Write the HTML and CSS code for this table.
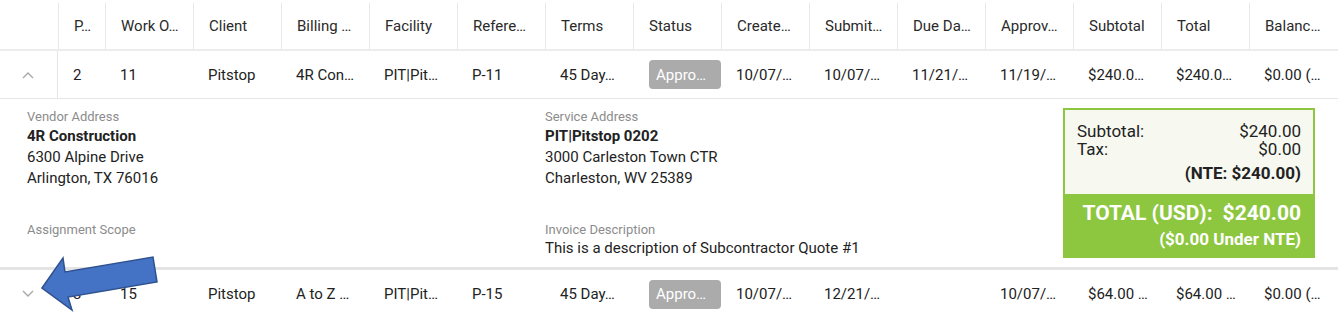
FILE: index.html
```html
<!DOCTYPE html>
<html>
<head>
<meta charset="utf-8">
<link rel="stylesheet" href="styles.css">
</head>
<body>
<div class="table">
  <div class="row head">
    <div class="cell first"></div>
    <div class="cell">P…</div>
    <div class="cell">Work O…</div>
    <div class="cell">Client</div>
    <div class="cell">Billing …</div>
    <div class="cell">Facility</div>
    <div class="cell">Refere…</div>
    <div class="cell">Terms</div>
    <div class="cell">Status</div>
    <div class="cell">Create…</div>
    <div class="cell">Submit…</div>
    <div class="cell">Due Da…</div>
    <div class="cell">Approv…</div>
    <div class="cell">Subtotal</div>
    <div class="cell">Total</div>
    <div class="cell">Balanc…</div>
  </div>

  <div class="row data open">
    <div class="cell first"><svg class="chev" width="12" height="8" viewBox="0 0 12 8"><path d="M1 7 L6 2 L11 7" fill="none" stroke="#a8a8a8" stroke-width="1.4"/></svg></div>
    <div class="cell">2</div>
    <div class="cell">11</div>
    <div class="cell">Pitstop</div>
    <div class="cell">4R Con…</div>
    <div class="cell">PIT|Pit…</div>
    <div class="cell">P-11</div>
    <div class="cell">45 Day…</div>
    <div class="cell"><span class="badge">Appro…</span></div>
    <div class="cell">10/07/…</div>
    <div class="cell">10/07/…</div>
    <div class="cell">11/21/…</div>
    <div class="cell">11/19/…</div>
    <div class="cell">$240.0…</div>
    <div class="cell">$240.0…</div>
    <div class="cell">$0.00 (…</div>
  </div>

  <div class="detail">
    <div class="col">
      <div class="label">Vendor Address</div>
      <div class="line strong">4R Construction</div>
      <div class="line">6300 Alpine Drive</div>
      <div class="line">Arlington, TX 76016</div>
      <div class="label gap">Assignment Scope</div>
    </div>
    <div class="col">
      <div class="label">Service Address</div>
      <div class="line strong">PIT|Pitstop 0202</div>
      <div class="line">3000 Carleston Town CTR</div>
      <div class="line">Charleston, WV 25389</div>
      <div class="label gap">Invoice Description</div>
      <div class="line desc">This is a description of Subcontractor Quote #1</div>
    </div>
    <div class="summary">
      <div class="sum-top">
        <div class="sum-row"><span>Subtotal:</span><span>$240.00</span></div>
        <div class="sum-row"><span>Tax:</span><span>$0.00</span></div>
        <div class="sum-nte">(NTE: $240.00)</div>
      </div>
      <div class="sum-total">
        <div class="total-line"><span>TOTAL (USD):</span><span>$240.00</span></div>
        <div class="under">($0.00 Under NTE)</div>
      </div>
    </div>
  </div>

  <div class="row data">
    <div class="cell first"><svg class="chev" width="12" height="8" viewBox="0 0 12 8"><path d="M1 1 L6 6 L11 1" fill="none" stroke="#a8a8a8" stroke-width="1.4"/></svg></div>
    <div class="cell">3</div>
    <div class="cell">15</div>
    <div class="cell">Pitstop</div>
    <div class="cell">A to Z …</div>
    <div class="cell">PIT|Pit…</div>
    <div class="cell">P-15</div>
    <div class="cell">45 Day…</div>
    <div class="cell"><span class="badge">Appro…</span></div>
    <div class="cell">10/07/…</div>
    <div class="cell">12/21/…</div>
    <div class="cell"></div>
    <div class="cell">10/07/…</div>
    <div class="cell">$64.00 …</div>
    <div class="cell">$64.00 …</div>
    <div class="cell">$0.00 (…</div>
  </div>
</div>

<svg class="arrow" width="170" height="70" viewBox="0 0 170 70">
  <polygon points="42,33 63,3 65,17 153,2 157,27 68,42 72,55" fill="#4472c4" stroke="#2f528f" stroke-width="1.5" stroke-linejoin="miter"/>
</svg>
</body>
</html>
```

FILE: styles.css
```css
* { box-sizing: border-box; }
html, body { margin: 0; padding: 0; background: #fff; }
body {
  width: 1338px;
  height: 322px;
  overflow: hidden;
  position: relative;
  font-family: Roboto, "Noto Sans", "Liberation Sans", sans-serif;
  color: #222;
  font-size: 15px;
}
.table { width: 1338px; }
.row {
  display: grid;
  grid-template-columns: 58px 47px repeat(14, 88px);
}
.cell {
  display: flex;
  align-items: center;
  padding-left: 15px;
  white-space: nowrap;
  overflow: hidden;
}
.cell.first { padding-left: 0; justify-content: center; padding-right: 2px; }
.head {
  height: 51px;
  padding-top: 3px;
  border-bottom: 2px solid #ececec;
  color: #2a2a2a;
}
.head .cell { border-left: 1px solid #e8e8e8; }
.head .cell.first { border-left: none; }
.data { height: 48px; }
.data.open { border-bottom: 1px solid #e6e6e6; }
.data.open .cell.first { border-right: 1px solid #dfe6ee; }
.chev { display: block; }
.badge {
  display: inline-flex;
  align-items: center;
  height: 29px;
  width: 74px;
  padding-left: 7px;
  margin-left: 1px;
  background: #ababab;
  color: #fff;
  border-radius: 4px;
}
.detail {
  display: grid;
  grid-template-columns: 518px 518px 252px;
  padding: 9px 23px 0 27px;
  height: 171px;
  border-bottom: 3px solid #e4e4e4;
}
.label {
  font-size: 13px;
  line-height: 18px;
  color: #8c8c8c;
}
.label.gap { margin-top: 32px; }
.line { line-height: 21px; }
.line.strong { font-weight: 700; }
.line.desc { line-height: 19px; }
.summary {
  border: 2px solid #8dc63f;
  height: 150px;
  display: flex;
  flex-direction: column;
}
.sum-top {
  background: #f7f9f1;
  padding: 12px 12px 0 12px;
  height: 84px;
  font-size: 17px;
}
.sum-row {
  display: flex;
  justify-content: space-between;
  line-height: 18px;
}
.sum-nte {
  text-align: right;
  font-weight: 700;
  line-height: 20px;
  margin-top: 5px;
}
.sum-total {
  flex: 1;
  background: #8dc63f;
  color: #fff;
  font-weight: 700;
  padding: 6px 12px 0 12px;
  text-align: right;
}
.total-line {
  font-size: 21px;
  line-height: 27px;
  display: flex;
  justify-content: flex-end;
  gap: 10px;
}
.under {
  font-size: 17px;
  line-height: 21px;
  margin-top: 2px;
}
.arrow {
  position: absolute;
  left: 0;
  top: 255px;
}
```
